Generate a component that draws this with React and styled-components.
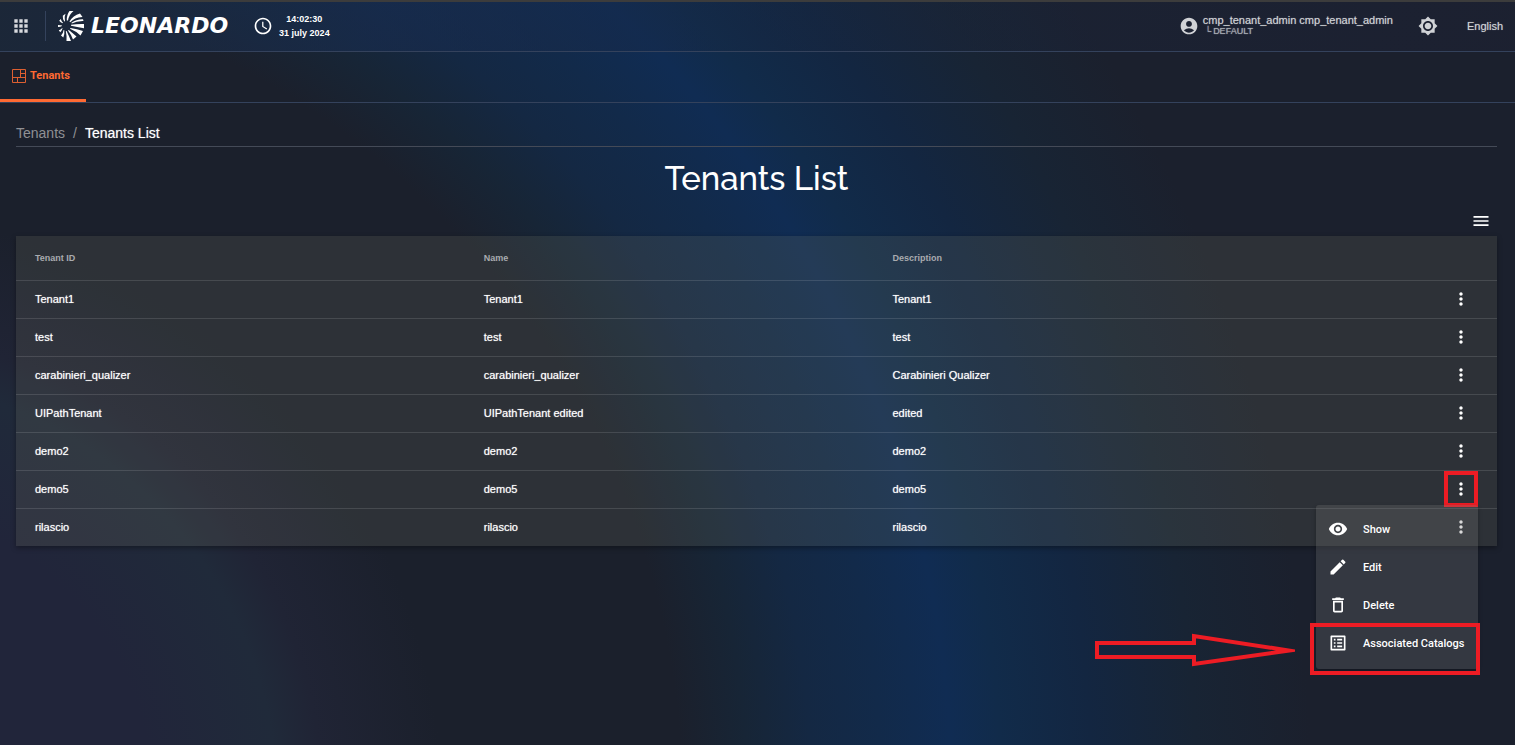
import React from "react";
import styled, { createGlobalStyle } from "styled-components";
import {
  MdApps, MdAccessTime, MdAccountCircle, MdBrightness7, MdMenu, MdMoreVert,
  MdVisibility, MdEdit, MdDeleteOutline, MdListAlt,
} from "react-icons/md";

const GlobalStyle = createGlobalStyle`
  *, *::before, *::after { box-sizing: border-box; }
  body {
    margin: 0;
    color: #fff;
    font-family: "Liberation Sans", Arial, sans-serif;
    font-size: 12px;
    background: #1b202d;
  }
  button { padding: 0; border: 0; background: none; color: inherit; font: inherit; cursor: pointer; }
  a { color: inherit; text-decoration: none; }
  svg { display: block; flex: none; }
`;

const Page = styled.div`
  min-height: 100vh;
  overflow: hidden;
  border-top: 2px solid #3c3c3c;
  background: radial-gradient(circle at -148px 800px,
    #21253a 300px, #202a3a 425px, #202435 470px, #1b202c 590px, #1b202c 830px,
    #172536 895px, #142843 960px, #122a4a 1030px, #102c53 1100px, #112b4a 1150px,
    #132641 1240px, #182434 1345px, #1b202d 1460px);
`;

const Header = styled.header`
  display: flex;
  align-items: center;
  height: 50px;
  padding: 0 12px 2px 11px;
  border-bottom: 1px solid #34425c;
  background: linear-gradient(100deg, rgba(28, 46, 68, 0.5), rgba(24, 44, 80, 0.6) 25%, rgba(24, 38, 64, 0.3) 50%, rgba(30, 34, 54, 0.4));
`;

const AppsButton = styled.button`
  display: flex;
  color: #d8dade;
`;

const Divider = styled.span`
  width: 1px;
  height: 30px;
  margin: 0 12px 0 14px;
  background: #34425c;
`;

const Brand = styled.a`
  display: flex;
  align-items: center;
  gap: 6px;
  font-family: "DejaVu Sans", sans-serif;
  font-size: 22px;
  font-weight: 700;
  font-style: italic;
  line-height: 30px;
`;

const Clock = styled.div`
  display: flex;
  align-items: center;
  gap: 6px;
  margin-left: 25px;
`;

const ClockText = styled.div`
  font-size: 9px;
  font-weight: 700;
  line-height: 14px;
  text-align: center;
`;

const Account = styled.div`
  display: flex;
  align-items: center;
  gap: 4px;
  margin-left: auto;
  color: #d0d2d6;
`;

const AccountName = styled.div`
  font-size: 11px;
  line-height: 12px;
  text-shadow: 0 0 1px rgba(208, 210, 214, 0.6);
`;

const AccountRole = styled.div`
  display: flex;
  gap: 2px;
  padding-left: 2px;
  font-size: 9px;
  line-height: 11px;
  color: #a4a8b0;
  text-shadow: 0 0 1px #a4a8b0;
`;

const ThemeButton = styled.button`
  display: flex;
  margin: 0 29px 0 25px;
  color: #d0d2d6;
`;

const LanguageButton = styled.button`
  color: #d0d2d6;
  font-size: 11px;
  text-shadow: 0 0 1px rgba(208, 210, 214, 0.6);
`;

const Tabs = styled.nav`
  display: flex;
  height: 51px;
  border-bottom: 1px solid #34425c;
`;

const Tab = styled.a`
  display: flex;
  align-items: center;
  gap: 4px;
  padding: 0 16px 0 12px;
  border-bottom: 3px solid #ff6a33;
  color: #ff6a33;
  font-family: Roboto, sans-serif;
  font-size: 11px;
  font-weight: 700;
`;

const Main = styled.main`
  padding: 20px 18px 0 16px;
`;

const Breadcrumb = styled.nav`
  display: flex;
  gap: 8px;
  height: 24px;
  border-bottom: 1px solid #444a57;
  font-size: 14px;
  line-height: 20px;
  color: #8f9095;
`;

const Current = styled.span`
  color: #fff;
  text-shadow: 0 0 1px rgba(255, 255, 255, 0.6);
`;

const Title = styled.h1`
  margin: 12px 0 0;
  font-family: Raleway, "Open Sans", sans-serif;
  font-size: 33px;
  font-weight: 500;
  line-height: 40px;
  text-align: center;
`;

const Toolbar = styled.div`
  display: flex;
  justify-content: flex-end;
  padding: 12px 6px 5px;
`;

const Table = styled.table`
  width: 100%;
  table-layout: fixed;
  border-collapse: collapse;
  background: rgba(125, 125, 105, 0.18);
  box-shadow: 0 2px 5px rgba(0, 0, 0, 0.35);
`;

const Col = styled.col`
  width: ${(p) => p.$width};
`;

const HeadCell = styled.th`
  height: 44px;
  padding: 0 19px;
  font-size: 9px;
  font-weight: 700;
  text-align: left;
  color: #a9abaf;
`;

const Row = styled.tr`
  height: 38px;
  border-top: 1px solid rgba(255, 255, 255, 0.12);
`;

const Cell = styled.td`
  padding: 0 19px;
  font-size: 11px;
  text-shadow: 0 0 1px rgba(255, 255, 255, 0.7);
`;

const ActionCell = styled.td`
  padding: 0 19px;
`;

const ActionAnchor = styled.div`
  position: relative;
  display: flex;
  justify-content: flex-end;
`;

const MoreButton = styled.button`
  display: flex;
  align-items: center;
  justify-content: center;
  width: 34px;
  height: 36px;
  border: 4px solid ${(p) => (p.$marked ? "#ed1c24" : "transparent")};
`;

const Menu = styled.ul`
  position: absolute;
  top: 34px;
  right: 0;
  z-index: 1;
  width: 162px;
  margin: 0;
  padding: 5px 0 7px;
  list-style: none;
  border-radius: 3px;
  background: rgba(120, 120, 120, 0.28);
  box-shadow: 0 2px 4px rgba(0, 0, 0, 0.3);
`;

const MenuButton = styled.button`
  display: flex;
  align-items: center;
  gap: 15px;
  width: 100%;
  height: 38px;
  padding: 0 12px;
  font-family: Roboto, sans-serif;
  font-size: 11px;
  font-weight: 500;
  white-space: nowrap;
`;

const Highlight = styled.span`
  position: absolute;
  right: -2px;
  bottom: -6px;
  left: -6px;
  height: 52px;
  border: 4px solid #ed1c24;
  pointer-events: none;
`;

const Arrow = styled.svg`
  position: absolute;
  right: 183px;
  bottom: 2px;
`;

const tenants = [
  ["Tenant1", "Tenant1", "Tenant1"],
  ["test", "test", "test"],
  ["carabinieri_qualizer", "carabinieri_qualizer", "Carabinieri Qualizer"],
  ["UIPathTenant", "UIPathTenant edited", "edited"],
  ["demo2", "demo2", "demo2"],
  ["demo5", "demo5", "demo5"],
  ["rilascio", "rilascio", "rilascio"],
];

const actions = [
  ["Show", MdVisibility],
  ["Edit", MdEdit],
  ["Delete", MdDeleteOutline],
  ["Associated Catalogs", MdListAlt],
];

function BurstLogo() {
  return (
    <svg width="27" height="30" viewBox="0 0 27 30" fill="#fff" aria-hidden="true">
      <path d="M8.800 9.500Q8.500 4 11.500 0H15.500Q11 3.500 10 9.500Z" />
      <path d="M11.500 10.500Q15 4.500 22 2.500L24.500 6Q16.500 6.500 12.200 11.300Z" />
      <path d="M13 13.800Q19 12.800 26 13V17.300Q19 16 13 14.800Z" />
      <path d="M13.500 11.800Q18.500 8 25 8.200L25.500 10Q18.500 9.800 13.800 12.600Z" />
      <path d="M12.500 17Q19 18 25 20L22.500 24.500Q17.500 20 12 17.800Z" />
      <path d="M10.800 19Q14.500 22 18.500 25.500L15 28.500Q13.500 24 10 19.500Z" />
      <path d="M8.600 20Q11 25 13 30H8.500Q9 25 7.800 20.200Z" />
      <path d="M6.300 19.300Q6.800 23 5.300 26.500L3 24.500Q5.200 22.500 5.600 19Z" />
      <path d="M4.500 17.500Q3.800 19.800 2.200 21.300L.8 19.300Q2.800 18.800 4.200 17Z" />
      <path d="M4 15Q2.500 16 0 16V14Q2.500 14 4 14.500Z" />
      <path d="M4.600 12.300Q2.500 11.500 1.200 9.800L2.800 8Q3.300 10 5 11.800Z" />
      <path d="M6.300 10.500Q4.500 8 4.800 4.800L7.500 2.800Q6 6 7 10.200Z" />
    </svg>
  );
}

function TenantsIcon() {
  return (
    <svg width="14" height="14" viewBox="0 0 14 14" fill="none" stroke="currentColor" opacity="0.85" aria-hidden="true">
      <path d="M.5.500H13.500V13.500H.5ZM8.500.500V8.500M.5 8.500H13.500M8.500 4.500H13.500M5.500 8.500V13.500" />
    </svg>
  );
}

function RowMenu() {
  return (
    <Menu>
      {actions.map(([label, Icon]) => (
        <li key={label}>
          <MenuButton type="button"><Icon size={20} />{label}</MenuButton>
        </li>
      ))}
      <Highlight />
      <Arrow width="200" height="34" viewBox="0 0 200 34" fill="none" stroke="#ed1c24" strokeWidth="4" aria-hidden="true">
        <path d="M2 10H99V3L194 17.500 99 31V24H2Z" strokeMiterlimit="10" />
      </Arrow>
    </Menu>
  );
}

export default function App() {
  return (
    <>
      <GlobalStyle />
      <Page>
        <Header>
          <AppsButton type="button" aria-label="Applications"><MdApps size={20} /></AppsButton>
          <Divider />
          <Brand href="#"><BurstLogo />LEONARDO</Brand>
          <Clock>
            <MdAccessTime size={20} />
            <ClockText>14:02:30<br />31 july 2024</ClockText>
          </Clock>
          <Account>
            <MdAccountCircle size={20} />
            <div>
              <AccountName>cmp_tenant_admin cmp_tenant_admin</AccountName>
              <AccountRole><span>└</span>DEFAULT</AccountRole>
            </div>
          </Account>
          <ThemeButton type="button" aria-label="Theme"><MdBrightness7 size={20} /></ThemeButton>
          <LanguageButton type="button">English</LanguageButton>
        </Header>
        <Tabs>
          <Tab href="#"><TenantsIcon />Tenants</Tab>
        </Tabs>
        <Main>
          <Breadcrumb aria-label="Breadcrumb">
            <a href="#">Tenants</a><span>/</span><Current>Tenants List</Current>
          </Breadcrumb>
          <Title>Tenants List</Title>
          <Toolbar>
            <button type="button" aria-label="Table options"><MdMenu size={20} /></button>
          </Toolbar>
          <Table>
            <colgroup>
              <Col $width="30.3%" />
              <Col $width="27.6%" />
              <Col />
              <Col $width="80px" />
            </colgroup>
            <thead>
              <tr>
                <HeadCell>Tenant ID</HeadCell>
                <HeadCell>Name</HeadCell>
                <HeadCell>Description</HeadCell>
                <HeadCell aria-label="Actions" />
              </tr>
            </thead>
            <tbody>
              {tenants.map(([id, name, description]) => (
                <Row key={id}>
                  <Cell>{id}</Cell>
                  <Cell>{name}</Cell>
                  <Cell>{description}</Cell>
                  <ActionCell>
                    <ActionAnchor>
                      <MoreButton type="button" aria-label={`Actions for ${id}`} $marked={id === "demo5"}>
                        <MdMoreVert size={20} />
                      </MoreButton>
                      {id === "demo5" && <RowMenu />}
                    </ActionAnchor>
                  </ActionCell>
                </Row>
              ))}
            </tbody>
          </Table>
        </Main>
      </Page>
    </>
  );
}
